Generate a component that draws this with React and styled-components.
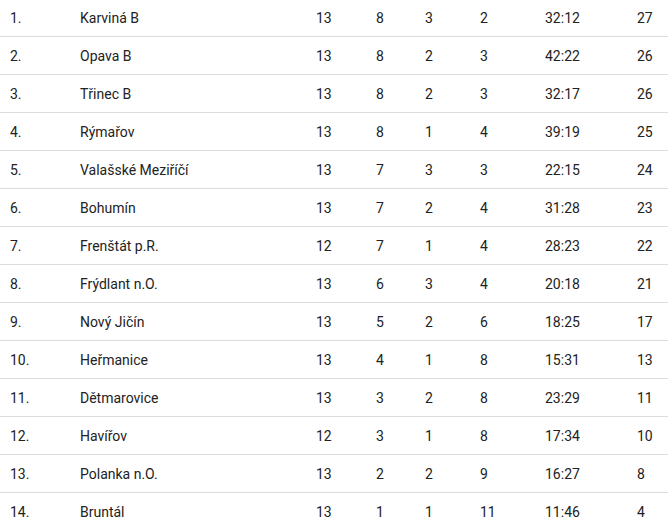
import React from "react";
import styled, { createGlobalStyle } from "styled-components";

const Global = createGlobalStyle`
  html, body { margin: 0; padding: 0; background: #fff; }
  body { font-family: Roboto, "Liberation Sans", sans-serif; }
`;

const Table = styled.div`
  width: 668px;
  margin-top: -1px;
`;

const Row = styled.div`
  display: grid;
  grid-template-columns: 70px 236px 60px 49px 55px 65px 92px 1fr;
  align-items: center;
  height: 37px;
  padding-left: 10px;
  border-bottom: 1px solid #dcdcdc;
  font-size: 14px;
  color: #222;
`;

const Cell = styled.div`
  white-space: nowrap;
`;

const rows = [
  ["1.", "Karviná B", 13, 8, 3, 2, "32:12", 27],
  ["2.", "Opava B", 13, 8, 2, 3, "42:22", 26],
  ["3.", "Třinec B", 13, 8, 2, 3, "32:17", 26],
  ["4.", "Rýmařov", 13, 8, 1, 4, "39:19", 25],
  ["5.", "Valašské Meziříčí", 13, 7, 3, 3, "22:15", 24],
  ["6.", "Bohumín", 13, 7, 2, 4, "31:28", 23],
  ["7.", "Frenštát p.R.", 12, 7, 1, 4, "28:23", 22],
  ["8.", "Frýdlant n.O.", 13, 6, 3, 4, "20:18", 21],
  ["9.", "Nový Jičín", 13, 5, 2, 6, "18:25", 17],
  ["10.", "Heřmanice", 13, 4, 1, 8, "15:31", 13],
  ["11.", "Dětmarovice", 13, 3, 2, 8, "23:29", 11],
  ["12.", "Havířov", 12, 3, 1, 8, "17:34", 10],
  ["13.", "Polanka n.O.", 13, 2, 2, 9, "16:27", 8],
  ["14.", "Bruntál", 13, 1, 1, 11, "11:46", 4],
];

export default function App() {
  return (
    <>
      <Global />
      <Table>
        {rows.map((r) => (
          <Row key={r[0]}>
            {r.map((c, i) => (
              <Cell key={i}>{c}</Cell>
            ))}
          </Row>
        ))}
      </Table>
    </>
  );
}
